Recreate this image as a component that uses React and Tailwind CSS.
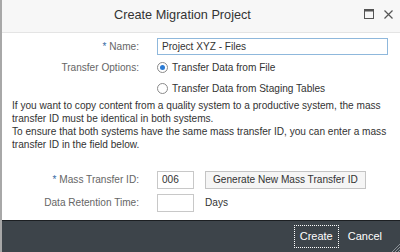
import React from "react";

export default function App() {
  const font = { fontFamily: '"Liberation Sans", Arial, sans-serif' };
  return (
    <div className="w-[400px] h-[252px] flex flex-col bg-white border-l-2 border-[#a8a8a8] overflow-hidden" style={font}>
      <div className="h-[33px] shrink-0 bg-[#f7f7f7] border-b border-[#e4e4e4] flex items-center relative">
        <div className="flex-1 text-center text-[12.7px] text-[#333] pr-[37px]">Create Migration Project</div>
        <svg className="absolute left-[362px] top-[9px]" width="10" height="10" viewBox="0 0 10 10">
          <rect x="0.5" y="0.5" width="9" height="9" fill="none" stroke="#555" strokeWidth="1" />
          <rect x="0.5" y="0.5" width="9" height="2" fill="#555" />
        </svg>
        <svg className="absolute left-[382px] top-[10px]" width="9" height="9" viewBox="0 0 9 9">
          <path d="M0.5 0.5 L8.5 8.5 M8.5 0.5 L0.5 8.5" stroke="#555" strokeWidth="1.2" />
        </svg>
      </div>
      <div className="flex-1 flex flex-col pt-[5px] text-[10.1px]">
        <div className="grid grid-cols-[137px_1fr] gap-x-[18px] items-center pr-[12px]">
          <div className="text-right text-[#666]"><span className="text-[#3c6ea5]">*</span> Name:</div>
          <div className="h-[17px] border border-[#8fb8dc] flex items-center px-[4px] text-[#333]">Project XYZ - Files</div>
          <div className="text-right text-[#666] mt-[4px]">Transfer Options:</div>
          <div className="flex items-center gap-[4px] mt-[4px] h-[17px] text-[#333]">
            <span className="w-[11px] h-[11px] rounded-full border border-[#8a8a8a] flex items-center justify-center">
              <span className="w-[5px] h-[5px] rounded-full bg-[#2b7bd4]" />
            </span>
            Transfer Data from File
          </div>
          <div />
          <div className="flex items-center gap-[4px] mt-[4px] h-[17px] text-[#333]">
            <span className="w-[11px] h-[11px] rounded-full border border-[#8a8a8a]" />
            Transfer Data from Staging Tables
          </div>
        </div>
        <div className="pl-[10px] pr-[4px] mt-[2px] text-[#333] leading-[13px]">
          <p>If you want to copy content from a quality system to a productive system, the mass transfer ID must be identical in both systems.</p>
          <p>To ensure that both systems have the same mass transfer ID, you can enter a mass transfer ID in the field below.</p>
        </div>
        <div className="grid grid-cols-[137px_auto_1fr] gap-x-[18px] gap-y-[5px] items-center mt-[20px]">
          <div className="text-right text-[#666]"><span className="text-[#3c6ea5]">*</span> Mass Transfer ID:</div>
          <div className="w-[37px] h-[18px] border border-[#c8c8c8] flex items-center px-[4px] text-[#333]">006</div>
          <div className="-ml-[7px]">
            <span className="inline-flex items-center h-[18px] px-[7px] border border-[#c4c4c4] bg-[#f5f5f5] text-[#333]">Generate New Mass Transfer ID</span>
          </div>
          <div className="text-right text-[#666]">Data Retention Time:</div>
          <div className="w-[37px] h-[18px] border border-[#c8c8c8]" />
          <div className="-ml-[7px] text-[#333]">Days</div>
        </div>
      </div>
      <div className="h-[32px] shrink-0 bg-[#3d444a] border-t border-[#1c1f22] flex items-center justify-end pr-[18px] gap-[9px] text-[11px] text-white relative">
        <span className="border border-dotted border-white px-[5px] py-[2px]">Create</span>
        <span>Cancel</span>
        <svg className="absolute right-0 bottom-0" width="10" height="10" viewBox="0 0 10 10">
          <path d="M10 2 L2 10 M10 5 L5 10 M10 8 L8 10" stroke="#8a9096" strokeWidth="1" />
        </svg>
      </div>
    </div>
  );
}
